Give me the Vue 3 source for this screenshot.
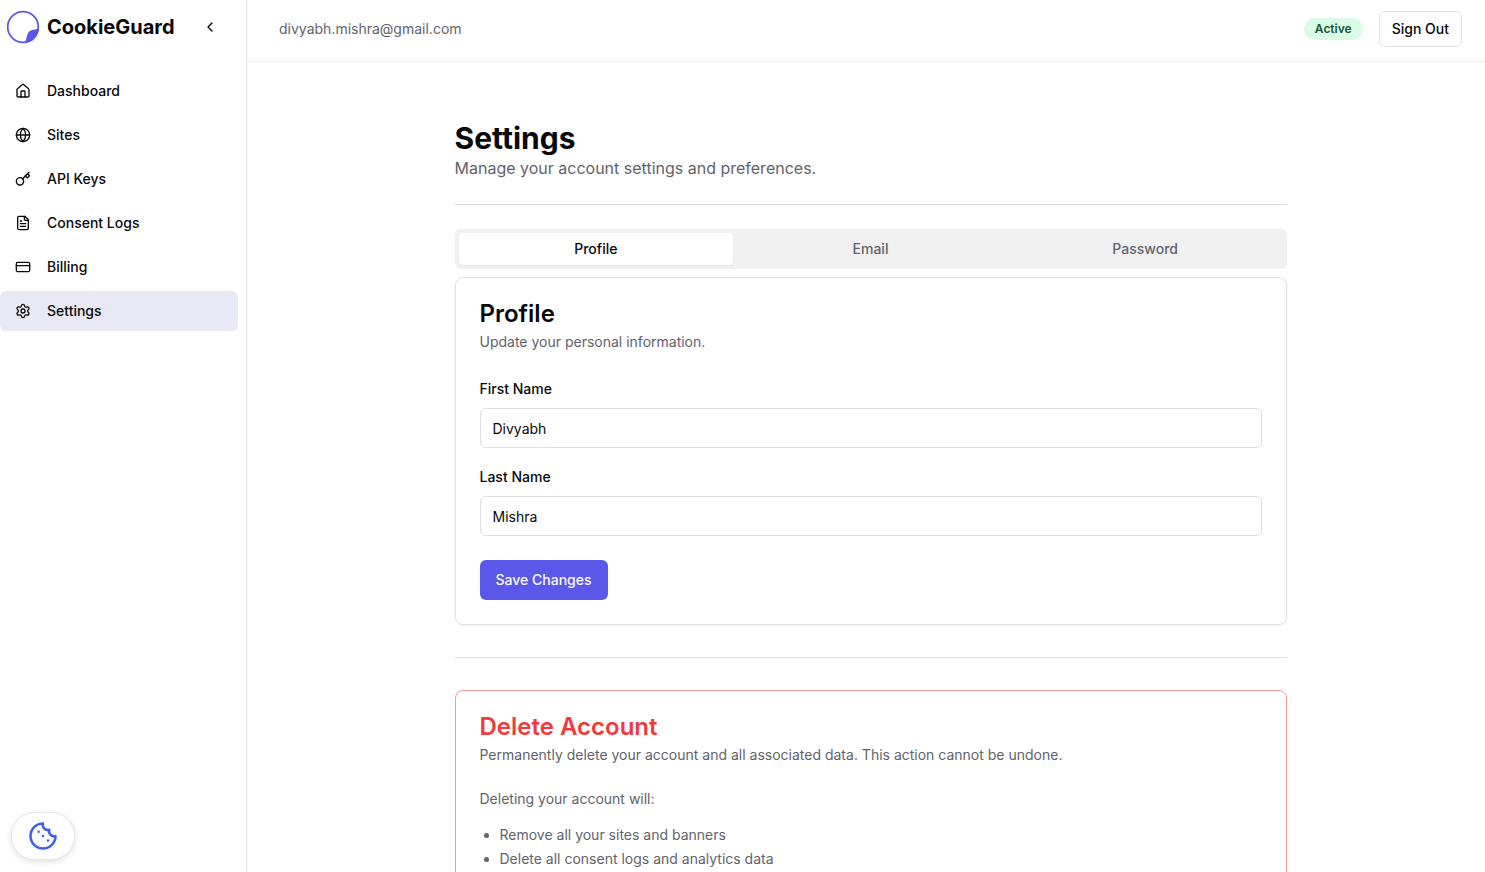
<script setup>
import { ref } from 'vue'

const nav = [
  { label: 'Dashboard', icon: 'house' },
  { label: 'Sites', icon: 'globe' },
  { label: 'API Keys', icon: 'key' },
  { label: 'Consent Logs', icon: 'file' },
  { label: 'Billing', icon: 'card' },
  { label: 'Settings', icon: 'gear' },
]
const icons = {
  house: ['M15 21v-8a1 1 0 0 0-1-1h-4a1 1 0 0 0-1 1v8', 'M3 10a2 2 0 0 1 .709-1.528l7-5.999a2 2 0 0 1 2.582 0l7 5.999A2 2 0 0 1 21 10v9a2 2 0 0 1-2 2H5a2 2 0 0 1-2-2z'],
  globe: ['M2 12a10 10 0 1 0 20 0a10 10 0 1 0-20 0', 'M12 2a14.5 14.5 0 0 0 0 20 14.5 14.5 0 0 0 0-20', 'M2 12h20'],
  key: ['m15.5 7.5 2.3 2.3a1 1 0 0 0 1.4 0l2.1-2.1a1 1 0 0 0 0-1.4L19 4', 'm21 2-9.6 9.6', 'M2 15.5a5.5 5.5 0 1 0 11 0a5.5 5.5 0 1 0-11 0'],
  file: ['M15 2H6a2 2 0 0 0-2 2v16a2 2 0 0 0 2 2h12a2 2 0 0 0 2-2V7Z', 'M14 2v4a2 2 0 0 0 2 2h4', 'M10 9H8', 'M16 13H8', 'M16 17H8'],
  card: ['M4 5h16a2 2 0 0 1 2 2v10a2 2 0 0 1-2 2H4a2 2 0 0 1-2-2V7a2 2 0 0 1 2-2z', 'M2 10h20'],
  gear: ['M9.671 4.136a2.34 2.34 0 0 1 4.659 0 2.34 2.34 0 0 0 3.319 1.915 2.34 2.34 0 0 1 2.33 4.033 2.34 2.34 0 0 0 0 3.831 2.34 2.34 0 0 1-2.33 4.033 2.34 2.34 0 0 0-3.319 1.915 2.34 2.34 0 0 1-4.659 0 2.34 2.34 0 0 0-3.32-1.915 2.34 2.34 0 0 1-2.33-4.033 2.34 2.34 0 0 0 0-3.831A2.34 2.34 0 0 1 6.35 6.051a2.34 2.34 0 0 0 3.319-1.915', 'M9 12a3 3 0 1 0 6 0a3 3 0 1 0-6 0'],
}
const tabs = ['Profile', 'Email', 'Password']
const activeTab = ref('Profile')
const firstName = ref('Divyabh')
const lastName = ref('Mishra')
</script>

<template>
  <div class="shell">
    <aside class="sidebar">
      <div class="brand">
        <svg class="logo" viewBox="0 0 34 34" aria-hidden="true">
          <circle cx="17" cy="17" r="15.3" fill="none" stroke="#5b57e8" stroke-width="1.7" />
          <path d="M32.8 18.300C29 20 26 19.500 23.500 21.200C20.500 23.500 21.500 28 18.300 32.900C26.500 33 32.700 26.500 32.800 18.300Z" fill="#5b57e8" />
        </svg>
        <span class="brand-name">CookieGuard</span>
        <button class="collapse" type="button" aria-label="Collapse sidebar">
          <svg class="icon" viewBox="0 0 24 24"><path d="m15 18-6-6 6-6" /></svg>
        </button>
      </div>
      <nav class="nav">
        <a v-for="item in nav" :key="item.label" href="#" class="nav-item" :class="{ current: item.label === 'Settings' }">
          <svg class="icon" viewBox="0 0 24 24" aria-hidden="true">
            <path v-for="d in icons[item.icon]" :key="d" :d="d" />
          </svg>
          {{ item.label }}
        </a>
      </nav>
      <button class="cookie" type="button" aria-label="Cookie preferences">
        <svg viewBox="0 0 24 24" aria-hidden="true">
          <path d="M12 2a10 10 0 1 0 10 10 4 4 0 0 1-5-5 4 4 0 0 1-5-5" />
          <path d="M8.500 8.500v.01M12 12v.01M16 15.500v.01" />
        </svg>
      </button>
    </aside>

    <div class="page">
      <header class="topbar">
        <span class="email">divyabh.mishra@gmail.com</span>
        <span class="badge">Active</span>
        <button class="signout" type="button">Sign Out</button>
      </header>
      <main class="main">
        <div class="content">
          <h1>Settings</h1>
          <p class="lead">Manage your account settings and preferences.</p>
          <hr class="rule-top">
          <div class="tabs" role="tablist">
            <button v-for="tab in tabs" :key="tab" type="button" role="tab" :aria-selected="tab === activeTab"
              class="tab" :class="{ selected: tab === activeTab }" @click="activeTab = tab">{{ tab }}</button>
          </div>
          <section class="card">
            <h2>Profile</h2>
            <p class="desc">Update your personal information.</p>
            <form class="form" @submit.prevent>
              <div class="field">
                <label for="first-name">First Name</label>
                <input id="first-name" v-model="firstName" type="text">
              </div>
              <div class="field">
                <label for="last-name">Last Name</label>
                <input id="last-name" v-model="lastName" type="text">
              </div>
              <button class="save" type="submit">Save Changes</button>
            </form>
          </section>
          <hr class="rule-mid">
          <section class="card danger">
            <h2>Delete Account</h2>
            <p class="desc">Permanently delete your account and all associated data. This action cannot be undone.</p>
            <p class="warn">Deleting your account will:</p>
            <ul>
              <li>Remove all your sites and banners</li>
              <li>Delete all consent logs and analytics data</li>
            </ul>
          </section>
        </div>
      </main>
    </div>
  </div>
</template>

<style>
body { margin: 0; background: #fff; }
</style>

<style scoped>
* { box-sizing: border-box; }
.shell {
  display: flex;
  height: 100vh;
  font-family: Inter, "Liberation Sans", sans-serif;
  font-size: 14px;
  line-height: 20px;
  color: #09090b;
}
button, input { font: inherit; color: inherit; margin: 0; }
button { border: 0; background: none; padding: 0; cursor: pointer; }
h1, h2, p, ul { margin: 0; }
.icon {
  width: 16px;
  height: 16px;
  flex: none;
  fill: none;
  stroke: currentColor;
  stroke-width: 2;
  stroke-linecap: round;
  stroke-linejoin: round;
}
.sidebar {
  flex: none;
  display: flex;
  flex-direction: column;
  width: 247px;
  border-right: 1px solid #e2e2e5;
}
.brand {
  display: flex;
  align-items: center;
  height: 54px;
  padding: 0 28px 0 6px;
}
.logo { width: 34px; height: 34px; }
.brand-name { margin-left: 7px; font-size: 20px; line-height: 28px; font-weight: 700; }
.collapse { display: flex; margin-left: auto; }
.nav { display: flex; flex-direction: column; gap: 4px; padding: 17px 8px 0 0; }
.nav-item {
  display: flex;
  align-items: center;
  gap: 16px;
  height: 40px;
  padding: 0 15px;
  border-radius: 6px;
  color: inherit;
  font-weight: 500;
  text-decoration: none;
}
.nav-item.current { background: #e9e9f5; }
.cookie {
  display: flex;
  align-items: center;
  justify-content: center;
  width: 64px;
  height: 48px;
  margin: auto 0 12px 11px;
  border: 1px solid #e5e7eb;
  border-radius: 24px;
  background: #fff;
  box-shadow: 0 2px 6px rgba(0, 0, 0, .12);
}
.cookie svg {
  width: 30px;
  height: 30px;
  fill: none;
  stroke: #3f5fee;
  stroke-width: 2;
  stroke-linecap: round;
  stroke-linejoin: round;
}
.page { flex: 1; min-width: 0; display: flex; flex-direction: column; }
.topbar {
  flex: none;
  display: flex;
  align-items: center;
  height: 62px;
  padding: 0 23px 4px 32px;
  border-bottom: 1px solid #f1f1f2;
}
.email { margin-right: auto; color: #63636b; }
.badge {
  padding: 3px 11px;
  border-radius: 11px;
  background: #dafbe5;
  color: #18562f;
  font-size: 12px;
  line-height: 16px;
  font-weight: 600;
}
.signout {
  height: 36px;
  margin-left: 16px;
  padding: 0 12px;
  border: 1px solid #e2e2e5;
  border-radius: 6px;
  font-weight: 500;
}
.main {
  flex: 1;
  min-height: 0;
  overflow-y: auto;
  scrollbar-width: none;
  padding: 58px 23px 58px 32px;
}
.content { max-width: 832px; margin: 0 auto; }
h1 { font-size: 30px; line-height: 36px; font-weight: 700; }
.lead { font-size: 16px; line-height: 24px; color: #63636b; }
hr { border: 0; height: 1px; background: #e0e0e3; }
.rule-top { margin: 24px 0; }
.rule-mid { margin: 32px 0; }
.tabs {
  display: grid;
  grid-template-columns: repeat(3, 1fr);
  height: 40px;
  padding: 4px;
  margin-bottom: 8px;
  border-radius: 6px;
  background: #f1f1f2;
}
.tab { border-radius: 4px; color: #63636b; font-weight: 500; }
.tab.selected { background: #fff; color: #09090b; box-shadow: 0 1px 2px rgba(0, 0, 0, .05); }
.card {
  padding: 24px;
  border: 1px solid #e0e0e3;
  border-radius: 8px;
  box-shadow: 0 1px 2px rgba(0, 0, 0, .05);
}
.card h2 { font-size: 24px; line-height: 24px; font-weight: 600; margin-bottom: 6px; }
.desc, .warn { color: #63636b; }
.form { margin-top: 24px; display: flex; flex-direction: column; gap: 16px; }
.field { display: flex; flex-direction: column; gap: 6px; }
.field label { line-height: 26px; font-weight: 500; }
.field input {
  width: 100%;
  height: 40px;
  padding: 0 12px;
  border: 1px solid #e0e0e3;
  border-radius: 6px;
  background: #fff;
}
.save {
  align-self: flex-start;
  height: 40px;
  margin-top: 8px;
  padding: 0 16px;
  border-radius: 6px;
  background: #5b57e8;
  color: #fafafa;
  font-weight: 500;
}
.danger { border-color: #f5999c; }
.danger h2 { color: #ee3c3c; }
.warn { margin-top: 24px; }
ul { margin-top: 16px; padding-left: 20px; color: #63636b; }
li + li { margin-top: 4px; }
</style>
